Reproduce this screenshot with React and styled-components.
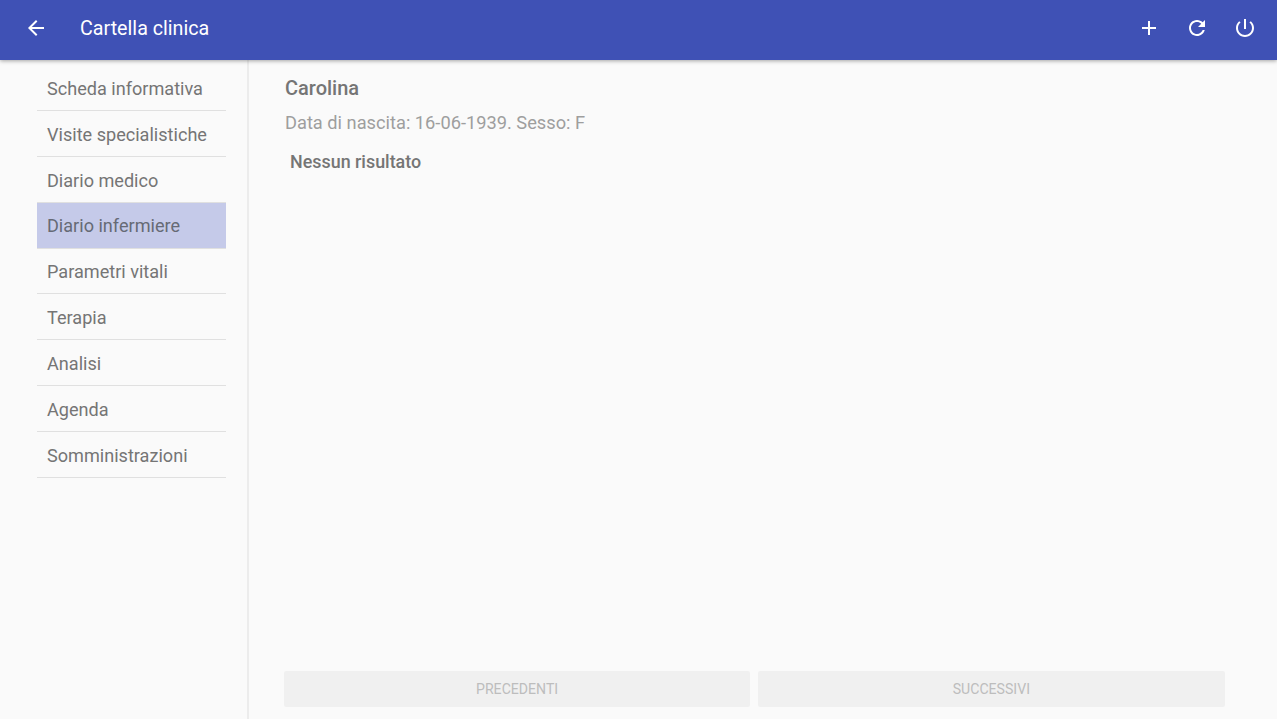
import React from "react";
import styled, { createGlobalStyle } from "styled-components";

const Global = createGlobalStyle`
  html, body { margin: 0; padding: 0; height: 100%; background: #fafafa; }
  #root { height: 100vh; }
  * { box-sizing: border-box; }
  body { font-family: Roboto, "Noto Sans", sans-serif; overflow: hidden; }
`;
const Page = styled.div`display: flex; flex-direction: column; width: 1277px; height: 719px; background: #fafafa;`;
const Toolbar = styled.header`
  height: 60px; flex: none; background: #3f51b5; color: #fff; display: flex; align-items: center;
  padding: 0 8px 4px 12px; box-shadow: 0 1px 4px rgba(0,0,0,.35); position: relative; z-index: 2;
`;
const IconButton = styled.button`
  width: 48px; height: 48px; padding: 0; border: 0; background: none; color: #fff; display: flex;
  align-items: center; justify-content: center;
`;
const Title = styled.h1`
  margin: 0 0 0 20px; flex: 1; font-size: 19.7px; font-weight: 400; line-height: 58px;
  padding-top: 2px; height: 60px;
`;
const Body = styled.div`flex: 1; display: flex; min-height: 0;`;
const Sidebar = styled.nav`
  width: 249px; flex: none; border-right: 2px solid #ececec; padding: 5px 21px 0 37px;
`;
const MenuItem = styled.div`
  height: 45.9px; padding: 1.6px 10px 0; display: flex; align-items: center; font-size: 18.1px; color: #757575;
  white-space: nowrap; border-bottom: 1px solid #e0e0e0;
  background: ${p => (p.$active ? "#c5cae9" : "transparent")};
  ${p => p.$active && "color: #666a75;"}
`;
const Main = styled.main`flex: 1; display: flex; flex-direction: column; padding: 12px 52px 12px 36px; min-width: 0;`;
const Name = styled.div`font-size: 20px; font-weight: 500; color: #757575; line-height: 32px;`;
const Meta = styled.div`font-size: 18.25px; color: #9e9e9e; line-height: 36px; margin-top: 1px;`;
const Empty = styled.div`font-size: 17.9px; font-weight: 500; color: #757575; line-height: 32px; margin: 5px 0 0 5px; flex: 1;`;
const Pager = styled.div`display: flex; gap: 8px; margin-left: -1px; margin-right: 0.5px;`;
const PagerButton = styled.button`
  flex: 1; height: 36px; border: 0; border-radius: 2px; background: #f0f0f0; color: #bdbdbd;
  font-family: inherit; font-size: 14.1px; text-transform: uppercase; padding: 0;
`;

const Svg = ({ children }) => (
  <svg width="24" height="24" viewBox="0 0 24 24" fill="currentColor">{children}</svg>
);

const items = ["Scheda informativa","Visite specialistiche","Diario medico","Diario infermiere","Parametri vitali","Terapia","Analisi","Agenda","Somministrazioni"];

export default function App() {
  return (
    <Page>
      <Global />
      <Toolbar>
        <IconButton aria-label="indietro"><Svg><path d="M20 11H7.83l5.59-5.59L12 4l-8 8 8 8 1.41-1.41L7.83 13H20v-2z" /></Svg></IconButton>
        <Title>Cartella clinica</Title>
        <IconButton aria-label="aggiungi"><Svg><path d="M19 13h-6v6h-2v-6H5v-2h6V5h2v6h6v2z" /></Svg></IconButton>
        <IconButton aria-label="aggiorna"><Svg><path d="M17.65 6.35C16.2 4.9 14.21 4 12 4c-4.42 0-7.99 3.58-7.99 8s3.57 8 7.99 8c3.73 0 6.84-2.55 7.73-6h-2.08c-.82 2.33-3.04 4-5.65 4-3.31 0-6-2.69-6-6s2.69-6 6-6c1.66 0 3.14.69 4.22 1.78L13 11h7V4l-2.35 2.35z" /></Svg></IconButton>
        <IconButton aria-label="esci"><Svg><path d="M13 3h-2v10h2V3zm4.83 2.17l-1.42 1.42C17.99 7.86 19 9.81 19 12c0 3.87-3.13 7-7 7s-7-3.13-7-7c0-2.19 1.01-4.14 2.58-5.42L6.17 5.17C4.23 6.82 3 9.26 3 12c0 4.97 4.03 9 9 9s9-4.03 9-9c0-2.74-1.23-5.18-3.17-6.83z" /></Svg></IconButton>
      </Toolbar>
      <Body>
        <Sidebar>
          {items.map(t => <MenuItem key={t} $active={t === "Diario infermiere"}>{t}</MenuItem>)}
        </Sidebar>
        <Main>
          <Name>Carolina</Name>
          <Meta>Data di nascita: 16-06-1939. Sesso: F</Meta>
          <Empty>Nessun risultato</Empty>
          <Pager>
            <PagerButton disabled>Precedenti</PagerButton>
            <PagerButton disabled>Successivi</PagerButton>
          </Pager>
        </Main>
      </Body>
    </Page>
  );
}
